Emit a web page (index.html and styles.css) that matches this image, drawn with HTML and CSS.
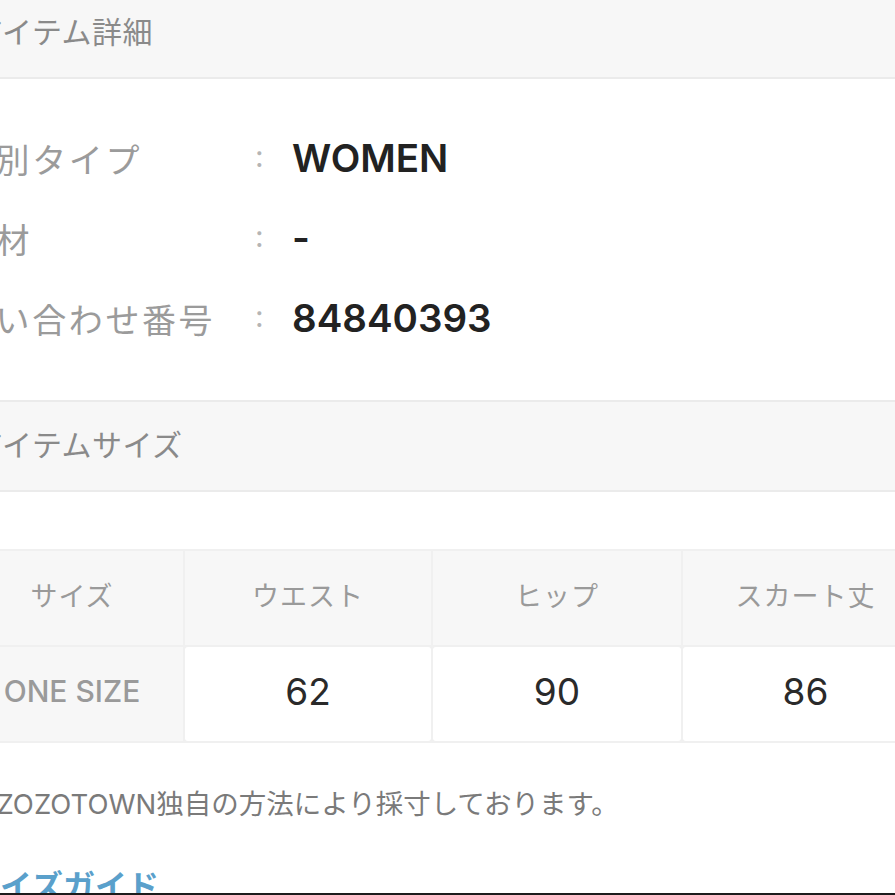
FILE: index.html
```html
<!DOCTYPE html>
<html lang="ja">
<head>
<meta charset="utf-8">
<title>アイテム詳細</title>
<link rel="stylesheet" href="styles.css">
</head>
<body>
<div class="page">
  <div class="sec-head sec-head--first">アイテム詳細</div>
  <div class="details">
    <div class="label">性別タイプ</div><div class="colon">:</div><div class="value">WOMEN</div>
    <div class="label">素材</div><div class="colon">:</div><div class="value">-</div>
    <div class="label">問い合わせ番号</div><div class="colon">:</div><div class="value">84840393</div>
  </div>
  <div class="sec-head">アイテムサイズ</div>
  <div class="size-table">
    <div class="th">サイズ</div>
    <div class="th">ウエスト</div>
    <div class="th">ヒップ</div>
    <div class="th">スカート丈</div>
    <div class="rh">ONE SIZE</div>
    <div class="td">62</div>
    <div class="td">90</div>
    <div class="td">86</div>
  </div>
  <p class="note">※<span class="latin">ZOZOTOWN</span>独自の方法により採寸しております。</p>
  <a class="guide" href="#">サイズガイド</a>
</div>
<div class="edge"></div>
</body>
</html>
```

FILE: styles.css
```css
html, body {
  margin: 0;
  padding: 0;
  background: #ffffff;
  overflow: hidden;
  height: 895px;
}

body {
  font-family: "Noto Sans CJK JP", "Noto Sans", sans-serif;
}

.page {
  margin-left: -43px;
  margin-top: -11px;
  width: 1000px;
}

.sec-head {
  height: 82px;
  display: flex;
  align-items: center;
  padding: 0 0 6px 16px;
  background: #f7f7f7;
  border-top: 2px solid #ebebeb;
  border-bottom: 2px solid #ebebeb;
  font-size: 30px;
  color: #8a8a8a;
  letter-spacing: 0.5px;
}

.sec-head--first {
  border-top: none;
}

.details {
  display: grid;
  grid-template-columns: 296px 37px 1fr;
  grid-auto-rows: 80px;
  align-items: center;
  padding: 39px 0 42px 2px;
}

.label {
  font-size: 34px;
  letter-spacing: 2.6px;
  color: #9b9b9b;
}

.colon {
  font-family: "Inter", "Liberation Sans", sans-serif;
  font-size: 30px;
  color: #b5b5b5;
  padding-bottom: 4px;
}

.value {
  font-family: "Inter", "Liberation Sans", sans-serif;
  font-weight: 600;
  font-size: 38.5px;
  color: #222222;
}

.size-table {
  margin-top: 57px;
  margin-left: 4px;
  display: grid;
  grid-template-columns: 222px 246px 248px 245px;
  grid-auto-rows: 94px;
  gap: 2px;
  padding: 2px 0;
  background: #f0f0f0;
}

.th, .rh, .td {
  display: flex;
  align-items: center;
  justify-content: center;
}

.th {
  background: #f7f7f7;
  font-size: 27px;
  color: #9a9a9a;
  letter-spacing: 1px;
  padding-bottom: 8px;
}

.rh {
  background: #f7f7f7;
  font-family: "Inter", "Liberation Sans", sans-serif;
  font-weight: 500;
  font-size: 30px;
  color: #9a9a9a;
  padding-bottom: 6px;
}

.td {
  background: #ffffff;
  border-radius: 3px;
  font-family: "Inter", "Liberation Sans", sans-serif;
  font-size: 37px;
  color: #2a2a2a;
  padding-bottom: 6px;
}

.note {
  margin: 41px 0 0 0;
  padding-left: 12px;
  line-height: 36px;
  font-size: 27.5px;
  color: #7a7a7a;
}

.latin {
  font-family: "Inter", "Liberation Sans", sans-serif;
}

.guide {
  display: block;
  margin-top: 42px;
  padding-left: 11px;
  line-height: 40px;
  font-size: 32px;
  font-weight: 700;
  color: #5aa0cb;
  text-decoration: none;
}

.edge {
  position: fixed;
  left: 0;
  right: 0;
  bottom: 0;
  height: 2px;
  background: #1c1c1c;
}
```
